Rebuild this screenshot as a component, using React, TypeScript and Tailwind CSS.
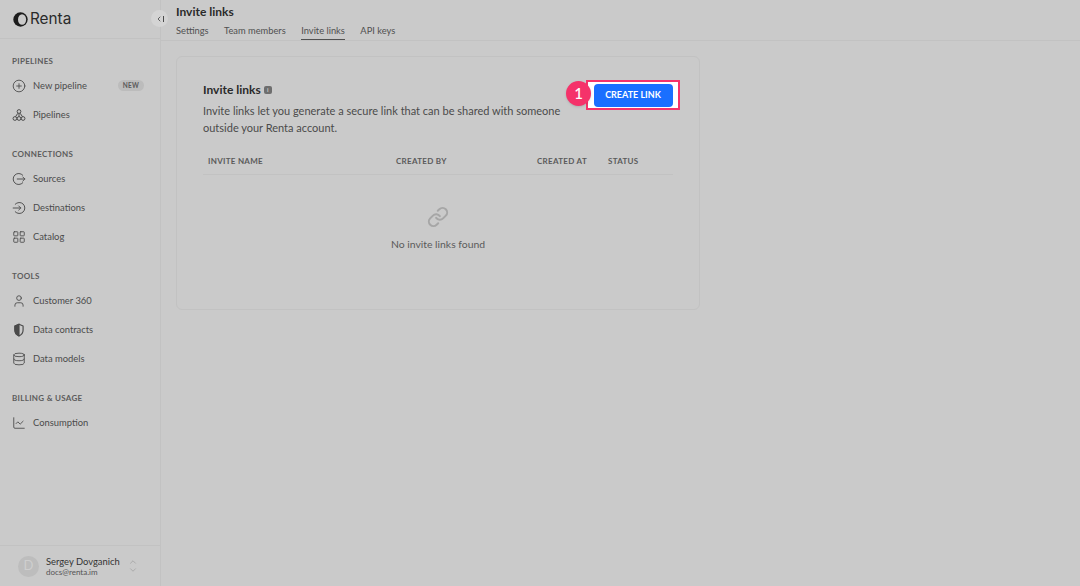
import React from "react";
import { CirclePlus, LayoutGrid, User, Database, ChevronUp, ChevronDown, Link, ChevronLeft, ChartLine } from "lucide-react";

function Shield() {
  return (
    <svg width="14" height="14" viewBox="0 0 24 24" fill="none" stroke="#4a4a4a" strokeWidth="2" strokeLinejoin="round">
      <path d="M12 2 5 5v7c0 5 3 8.5 7 10 4-1.500 7-5 7-10V5z" />
      <path d="M12 2 5 5v7c0 5 3 8.500 7 10z" fill="#4a4a4a" />
    </svg>
  );
}

function Pipes() {
  return (
    <svg width="14" height="14" viewBox="0 0 24 24" fill="none" stroke="#4a4a4a" strokeWidth="1.7">
      <circle cx="12" cy="6" r="3.2" />
      <circle cx="5" cy="18" r="3.2" />
      <circle cx="12" cy="18" r="3.2" />
      <circle cx="19" cy="18" r="3.2" />
      <path d="M12 9v6M10 9l-4 6M14 9l4 6" />
    </svg>
  );
}

function SourceIcon() {
  return (
    <svg width="14" height="14" viewBox="0 0 24 24" fill="none" stroke="#4a4a4a" strokeWidth="1.6" strokeLinecap="round" strokeLinejoin="round">
      <path d="M18.5 5.500A9.500 9.500 0 1 0 18.500 18.500" />
      <path d="M9 12h13M18.500 8.500 22 12l-3.500 3.500" />
    </svg>
  );
}

function DestIcon() {
  return (
    <svg width="14" height="14" viewBox="0 0 24 24" fill="none" stroke="#4a4a4a" strokeWidth="1.6" strokeLinecap="round" strokeLinejoin="round">
      <path d="M5.500 5.500A9.500 9.500 0 1 1 5.500 18.500" />
      <path d="M2 12h13M11.500 8.500 15 12l-3.500 3.500" />
    </svg>
  );
}

function Item({ icon, label, badge }: { icon: React.ReactNode; label: string; badge?: boolean }) {
  return (
    <div className="flex items-center h-[29px] pl-[12px] pr-[16px] text-[#4a4a4a]">
      <span className="w-[14px] h-[14px] flex items-center justify-center">{icon}</span>
      <span className="ml-[7px] text-[9.4px] leading-none">{label}</span>
      {badge && (
        <span className="ml-auto h-[11px] w-[26px] rounded-full bg-[#bcbcbc] text-[6.5px] font-bold tracking-[0.3px] text-[#5a5a5a] flex items-center justify-center">
          NEW
        </span>
      )}
    </div>
  );
}

function Group({ title, mt, children }: { title: string; mt: string; children: React.ReactNode }) {
  return (
    <div className={mt}>
      <div className="pl-[12px] h-[11px] flex items-center text-[8px] font-bold tracking-[0.3px] text-[#5c5c5c] mb-[5px]">{title}</div>
      {children}
    </div>
  );
}

const ic = { size: 14, strokeWidth: 1.5, color: "#4a4a4a" };

export default function App() {
  return (
    <div className="w-[1080px] h-[586px] flex bg-[#cacaca] overflow-hidden font-['Lato','Liberation_Sans',sans-serif] text-[#2a2a2a]">
      <aside className="relative w-[161px] h-full border-r border-[#c2c2c2] flex flex-col">
        <div className="h-[39px] flex items-center pl-[13px] border-b border-[#c2c2c2]">
          <svg width="15" height="15" viewBox="0 0 24 24">
            <circle cx="12" cy="12" r="11.500" fill="#1c1c1c" />
            <ellipse cx="14.500" cy="12" rx="6.500" ry="8.500" fill="#cacaca" />
          </svg>
          <span className="ml-[2px] text-[15.3px] font-['Inter',sans-serif] leading-none text-[#2a2a2a]">Renta</span>
        </div>
        <span className="absolute left-[151px] top-[10px] w-[17px] h-[17px] rounded-full bg-[#d4d4d4] flex items-center justify-center">
          <ChevronLeft size={8} strokeWidth={2.5} color="#4a4a4a" />
          <span className="w-[1px] h-[6px] bg-[#4a4a4a]" />
        </span>
        <nav className="flex-1">
          <Group title="PIPELINES" mt="mt-[16px]">
            <Item icon={<CirclePlus {...ic} />} label="New pipeline" badge />
            <Item icon={<Pipes />} label="Pipelines" />
          </Group>
          <Group title="CONNECTIONS" mt="mt-[19px]">
            <Item icon={<SourceIcon />} label="Sources" />
            <Item icon={<DestIcon />} label="Destinations" />
            <Item icon={<LayoutGrid {...ic} />} label="Catalog" />
          </Group>
          <Group title="TOOLS" mt="mt-[19px]">
            <Item icon={<User {...ic} />} label="Customer 360" />
            <Item icon={<Shield />} label="Data contracts" />
            <Item icon={<Database {...ic} />} label="Data models" />
          </Group>
          <Group title="BILLING & USAGE" mt="mt-[19px]">
            <Item icon={<ChartLine {...ic} />} label="Consumption" />
          </Group>
        </nav>
        <div className="h-[41px] border-t border-[#c2c2c2] flex items-center pl-[18px]">
          <span className="w-[21px] h-[21px] rounded-full bg-[#bdbdbd] text-[#cfcfcf] text-[13px] flex items-center justify-center">D</span>
          <div className="ml-[7px] leading-none pt-[1px]">
            <div className="text-[9.4px] text-[#333333]">Sergey Dovganich</div>
            <div className="text-[8px] mt-[1px] text-[#555555]">docs@renta.im</div>
          </div>
          <span className="ml-[8px] flex flex-col items-center">
            <ChevronUp size={10} strokeWidth={1.2} color="#8a8a8a" className="-mb-[2px]" />
            <ChevronDown size={10} strokeWidth={1.2} color="#8a8a8a" />
          </span>
        </div>
      </aside>

      <main className="flex-1 flex flex-col">
        <header className="h-[41px] border-b border-[#c2c2c2] pl-[15px] shrink-0">
          <h1 className="text-[12px] font-bold leading-none pt-[6px] text-[#2a2a2a]">Invite links</h1>
          <div className="flex gap-[15.5px] mt-[5px] text-[9.3px] text-[#505050] leading-none">
            <span className="h-[17px] pt-[3px]">Settings</span>
            <span className="h-[17px] pt-[3px]">Team members</span>
            <span className="h-[17px] pt-[3px] border-b border-[#505050]">Invite links</span>
            <span className="h-[17px] pt-[3px]">API keys</span>
          </div>
        </header>

        <section className="relative mt-[15px] ml-[15px] w-[524px] h-[254px] rounded-[6px] border border-[#c2c2c2] pt-[26px] px-[26px]">
          <div className="flex items-center h-[14px]">
            <h2 className="text-[12px] font-bold leading-none text-[#2a2a2a]">Invite links</h2>
            <span className="ml-[3px] w-[8px] h-[8px] rounded-[2px] bg-[#6e6e6e] flex items-center justify-center">
              <span className="text-[#cacaca] text-[6px] font-bold leading-none">i</span>
            </span>
          </div>
          <p className="mt-[5px] w-[362px] text-[11px] leading-[17px] text-[#4a4a4a]">
            Invite links let you generate a secure link that can be shared with someone outside your Renta account.
          </p>

          <div className="mt-[11px] h-[28px] flex items-center border-b border-[#c2c2c2] w-[470px] text-[8px] font-bold tracking-[0.3px] text-[#5a5a5a]">
            <span className="ml-[5px] w-[188px]">INVITE NAME</span>
            <span className="w-[141px]">CREATED BY</span>
            <span className="w-[71px]">CREATED AT</span>
            <span>STATUS</span>
          </div>

          <div className="flex flex-col items-center w-[470px] mt-[31px]">
            <Link size={22} strokeWidth={2.2} color="#a6a6a6" />
            <div className="mt-[11px] text-[10.4px] leading-none text-[#5a5a5a]">No invite links found</div>
          </div>

          <div className="absolute left-[409px] top-[23px] w-[94px] h-[30px] bg-white border-2 border-[#f5326a] flex items-center justify-center">
            <button className="w-[79px] h-[23px] rounded-[4px] bg-[#1a6fff] text-white text-[9px] font-bold">CREATE LINK</button>
          </div>
          <div className="absolute left-[389px] top-[24px] w-[25px] h-[25px] rounded-full bg-[#f5326a] text-white text-[15px] font-medium flex items-center justify-center shadow-sm">1</div>
        </section>
      </main>
    </div>
  );
}
